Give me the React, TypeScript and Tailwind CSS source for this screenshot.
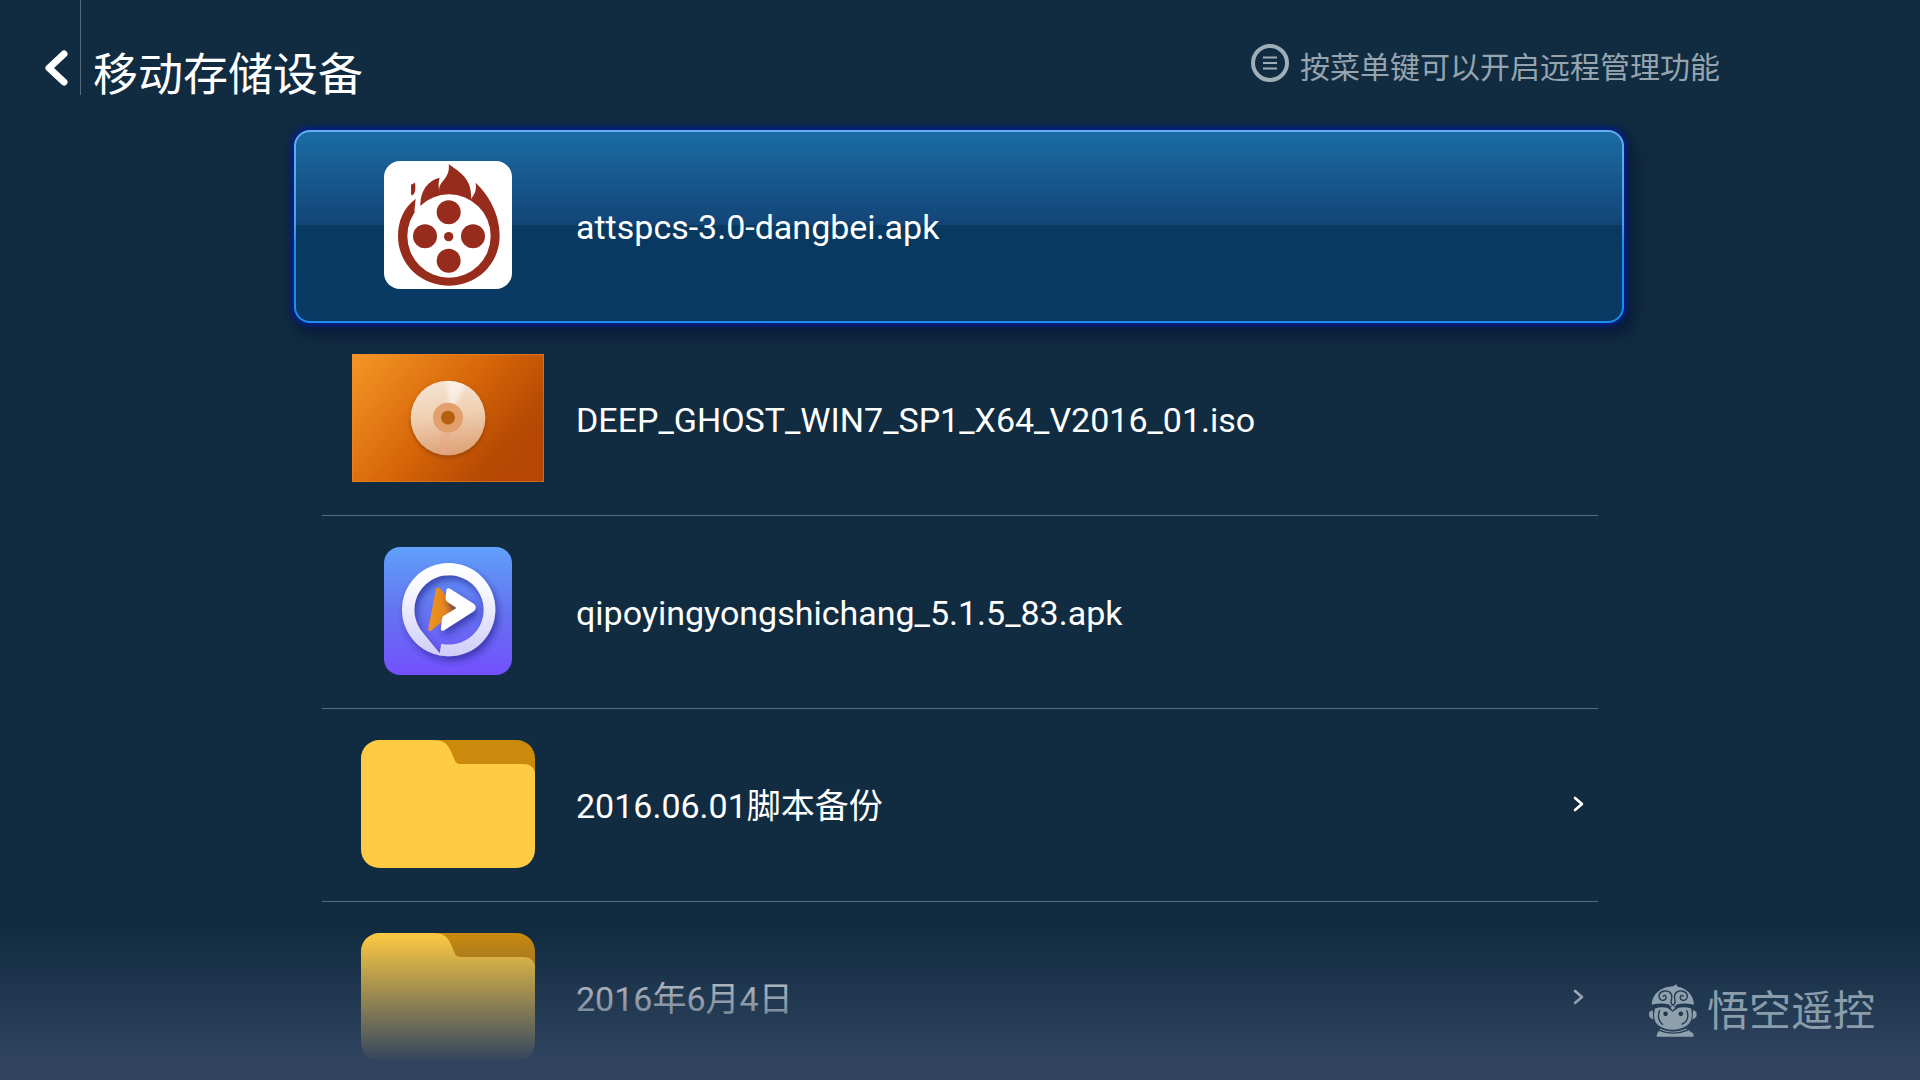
import type { ReactNode } from "react";

function FireReelIcon() {
  return (
    <svg viewBox="72 63 384 384" className="h-32 w-32 rounded-2xl bg-white" aria-hidden="true">
      <path
        fill="#972c1d"
        d="M167 176C130 204 114 244 114 288c0 84 68 149 153 149s152-66 152-150c0-70-37-125-72-159 3 24-3 33-14 49 4-53-25-77-67-104 3 23-6 37-17 50-12 14-14 24-9 33-6-12-5-28-1-43-35 8-60 40-58 88l-4 14c-13 4-10-8-10-39zM165 128l-12 6v27l3 6c9-5 12-15 9-39z"
      />
      <path fill="#fff" d="M163 213l5-39 13 3-2 20 16 4-25 26z" />
      <circle cx="267" cy="288" r="125" fill="#fff" />
      <g fill="#972c1d">
        <circle cx="266" cy="217" r="36" />
        <circle cx="195" cy="289" r="36" />
        <circle cx="339" cy="289" r="36" />
        <circle cx="266" cy="362" r="36" />
        <circle cx="266" cy="290" r="14" />
      </g>
    </svg>
  );
}

function DiscIcon() {
  return (
    <svg viewBox="66 42 576 384" className="h-32 w-48" aria-hidden="true">
      <defs>
        <linearGradient id="discBg" gradientUnits="userSpaceOnUse" x1="120" y1="20" x2="560" y2="400">
          <stop offset="0" stopColor="#f39323" />
          <stop offset="0.5" stopColor="#d76709" />
          <stop offset="0.85" stopColor="#b84b03" />
          <stop offset="1" stopColor="#b54604" />
        </linearGradient>
        <linearGradient id="discFace" x1="0.45" y1="0" x2="0.6" y2="1">
          <stop offset="0" stopColor="#f6e3d2" />
          <stop offset="0.45" stopColor="#efd0b2" />
          <stop offset="1" stopColor="#dda073" />
        </linearGradient>
        <filter id="discShadow" x="-20%" y="-20%" width="140%" height="140%">
          <feDropShadow dx="0" dy="6" stdDeviation="6" floodColor="#7a3000" floodOpacity="0.6" />
        </filter>
        <filter id="discGlint" x="-30%" y="-30%" width="160%" height="160%">
          <feGaussianBlur stdDeviation="7" />
        </filter>
        <clipPath id="discClip">
          <circle cx="354" cy="234" r="111" />
        </clipPath>
      </defs>
      <rect x="66" y="42" width="576" height="384" fill="url(#discBg)" />
      <rect x="67" y="43" width="574" height="382" fill="none" stroke="#ee8b2e" strokeOpacity="0.6" strokeWidth="3" />
      <circle cx="354" cy="234" r="112" fill="url(#discFace)" filter="url(#discShadow)" />
      <g clipPath="url(#discClip)" filter="url(#discGlint)">
        <path d="M356 230L352 110l60 14z" fill="#fff" fillOpacity="0.5" />
        <path d="M352 240l-34 110h40z" fill="#e9a58c" fillOpacity="0.5" />
      </g>
      <circle cx="354" cy="233" r="45" fill="#e39f6c" />
      <circle cx="354" cy="233" r="21" fill="#b5600f" />
    </svg>
  );
}

function PlayIcon() {
  return (
    <svg viewBox="72 51 384 384" className="h-32 w-32 rounded-2xl" aria-hidden="true">
      <defs>
        <linearGradient id="playBg" x1="0" y1="0" x2="0" y2="1">
          <stop offset="0" stopColor="#60a0fb" />
          <stop offset="0.5" stopColor="#6474f0" />
          <stop offset="1" stopColor="#7450ff" />
        </linearGradient>
        <linearGradient id="playRing" x1="0" y1="0" x2="0" y2="1">
          <stop offset="0" stopColor="#ffffff" />
          <stop offset="0.25" stopColor="#f8f9ff" />
          <stop offset="1" stopColor="#d0cdf8" />
        </linearGradient>
        <linearGradient id="playOrange" x1="0" y1="0" x2="1" y2="0">
          <stop offset="0" stopColor="#ef9422" />
          <stop offset="0.6" stopColor="#e5861c" />
          <stop offset="1" stopColor="#a75c20" />
        </linearGradient>
        <filter id="playShadow" x="-30%" y="-30%" width="160%" height="160%">
          <feDropShadow dx="8" dy="14" stdDeviation="11" floodColor="#28268c" floodOpacity="0.65" />
        </filter>
      </defs>
      <rect x="72" y="51" width="384" height="384" fill="url(#playBg)" />
      <path
        fill="url(#playRing)"
        fillRule="evenodd"
        filter="url(#playShadow)"
        d="M266 99A140 140 0 0 1 266 379A140 140 0 0 1 266 99zM244 341A104 104 0 1 0 187 306L239 370z"
      />
      <path d="M228 176q3-5 10-3l52 58q4 6-3 12l-75 60q-8 2-7-7z" fill="url(#playOrange)" />
      <path
        d="M259 181q2-9 11-5l71 45q12 11 0 23l-91 58q-9 1-7-9l3-27q1-7 8-10l36-22-28-19q-6-4-5-11z"
        fill="#fff"
        filter="url(#playShadow)"
      />
    </svg>
  );
}

function FolderIcon() {
  return (
    <svg viewBox="63 60 522 384" className="h-32 w-[174px]" aria-hidden="true">
      <path fill="#cb8a0c" d="M290 60h240a55 55 0 0 1 55 55v70H290z" />
      <path
        fill="#ffcb42"
        d="M118 60h164c28 0 41 12 50 32l12 28c4 9 9 12 18 12h187c22 0 33 10 36 28v229a55 55 0 0 1-55 55H118a55 55 0 0 1-55-55V115a55 55 0 0 1 55-55z"
      />
    </svg>
  );
}

function WukongLogo() {
  return (
    <svg viewBox="57 44 145 158" className="h-[53px] w-12" aria-hidden="true">
      <g fill="#8ea0ad">
        <path d="M65 106C66 74 92 51 130 50l9-6 5 7c28 5 48 26 49 55q-30-8-52-1l-12 13-12-13q-22-7-52 1z" />
        <path d="M68 122q-11 1-11 13t13 15zM190 122q11 1 11 13t-13 15z" />
        <path d="M75 117q20-6 37-2l17 12 17-12q18-4 38 2c6 26 0 43-13 52-26 16-60 16-84 0-14-10-18-28-12-52z" />
        <path d="M91 178q38 18 78 0l21 14q2 4 2 10H80q0-8 3-12z" />
      </g>
      <g fill="none" stroke="#1f394e" strokeLinecap="round">
        <path d="M129 106C118 102 126 92 126 82C126 66 112 63 103 64C88 66 83 80 91 89C99 96 112 90 108 80C106 76 101 77 100 80" strokeWidth="4" />
        <path d="M130 106C141 102 134 92 134 82C134 66 148 63 157 64C172 66 177 80 169 89C161 96 148 90 152 80C154 76 159 77 160 80" strokeWidth="4" />
        <path d="M89 123c-6 16-3 32 9 42M171 123c6 14 3 26-3 34l-11 7" strokeWidth="4" />
        <path d="M88 183q42 17 86-1" strokeWidth="4" />
      </g>
      <path d="M129 106l8 9-8 9-8-9z" fill="#8ea0ad" stroke="#1f394e" strokeWidth="2" />
      <circle cx="107" cy="133" r="7" fill="#1f394e" />
      <circle cx="153" cy="133" r="7" fill="#1f394e" />
    </svg>
  );
}

type Entry = { name: string; icon: ReactNode; folder?: boolean };

const entries: Entry[] = [
  { name: "attspcs-3.0-dangbei.apk", icon: <FireReelIcon /> },
  { name: "DEEP_GHOST_WIN7_SP1_X64_V2016_01.iso", icon: <DiscIcon /> },
  { name: "qipoyingyongshichang_5.1.5_83.apk", icon: <PlayIcon /> },
  { name: "2016.06.01脚本备份", icon: <FolderIcon />, folder: true },
  { name: "2016年6月4日", icon: <FolderIcon />, folder: true },
];

function Row({ entry, selected }: { entry: Entry; selected: boolean }) {
  return (
    <li className={selected ? "" : "pr-[26px] pl-7"}>
      <button
        type="button"
        className={
          selected
            ? "flex h-[193px] w-full items-start rounded-2xl border-2 border-transparent pt-[29px] pr-[38px] pl-14 text-left shadow-[0_0_5px_3px_#04208a,5px_8px_14px_6px_#0a1c38] [background:linear-gradient(#1a6ca5_0%,#134576_49%,#083960_49%,#083a64_100%)_padding-box,linear-gradient(#66aef0_0%,#4b9df0_49%,#1c8cf0_60%,#1c8cf5_100%)_border-box]"
            : "flex h-[193px] w-full items-start border-b border-[#566b7c] pt-[31px] pr-[13px] pl-[30px] text-left"
        }
      >
        <span className="flex w-48 shrink-0 justify-center">{entry.icon}</span>
        <span className="ml-8 flex h-32 flex-1 items-center pt-1 text-[34px] whitespace-nowrap">{entry.name}</span>
        {entry.folder && (
          <svg viewBox="0 0 12 18" className="mt-[55px] h-[18px] w-3" aria-hidden="true">
            <path d="M2 3l7 6-7 6" fill="none" stroke="#fff" strokeWidth="2.6" strokeLinecap="round" strokeLinejoin="round" />
          </svg>
        )}
      </button>
    </li>
  );
}

export default function App() {
  return (
    <div className="relative flex h-screen flex-col overflow-hidden bg-[#112c41] font-[Roboto,'Noto_Sans_CJK_SC',sans-serif] text-white">
      <header className="flex h-[130px] shrink-0 items-start pr-[200px] pl-11">
        <button type="button" aria-label="返回" className="mt-12">
          <svg viewBox="0 0 26 40" className="h-10 w-[26px]" aria-hidden="true">
            <path d="M20 6L5 20l15 14" fill="none" stroke="#fff" strokeWidth="7" strokeLinecap="round" strokeLinejoin="round" />
          </svg>
        </button>
        <div className="ml-[10px] h-[95px] w-px bg-[#56697a]" />
        <h1 className="mt-11 ml-3 text-[45px] leading-[64px]">移动存储设备</h1>
        <p className="mt-11 ml-auto flex items-start gap-[11px] text-[30px] leading-[48px] text-[#96a4af]">
          <svg viewBox="0 0 38 38" className="h-[38px] w-[38px]" fill="none" stroke="#a0aeb8" aria-hidden="true">
            <circle cx="19" cy="19" r="17" strokeWidth="4" />
            <path d="M12 13.5h14M12 19h14M12 24.5h14" strokeWidth="2" />
          </svg>
          按菜单键可以开启远程管理功能
        </p>
      </header>

      <main className="shrink-0 pr-[296px] pl-[294px]">
        <ul>
          {entries.map((entry, i) => (
            <Row key={entry.name} entry={entry} selected={i === 0} />
          ))}
        </ul>
      </main>

      <div className="pointer-events-none absolute inset-x-0 bottom-0 h-[148px] bg-[linear-gradient(#30446000_0%,#304460_88%)]" />
      <div className="absolute right-[45px] bottom-10 flex items-center gap-[10px] text-[42px] leading-[56px] text-[#8b9dab]">
        <WukongLogo />
        <span className="pt-1">悟空遥控</span>
      </div>
    </div>
  );
}
